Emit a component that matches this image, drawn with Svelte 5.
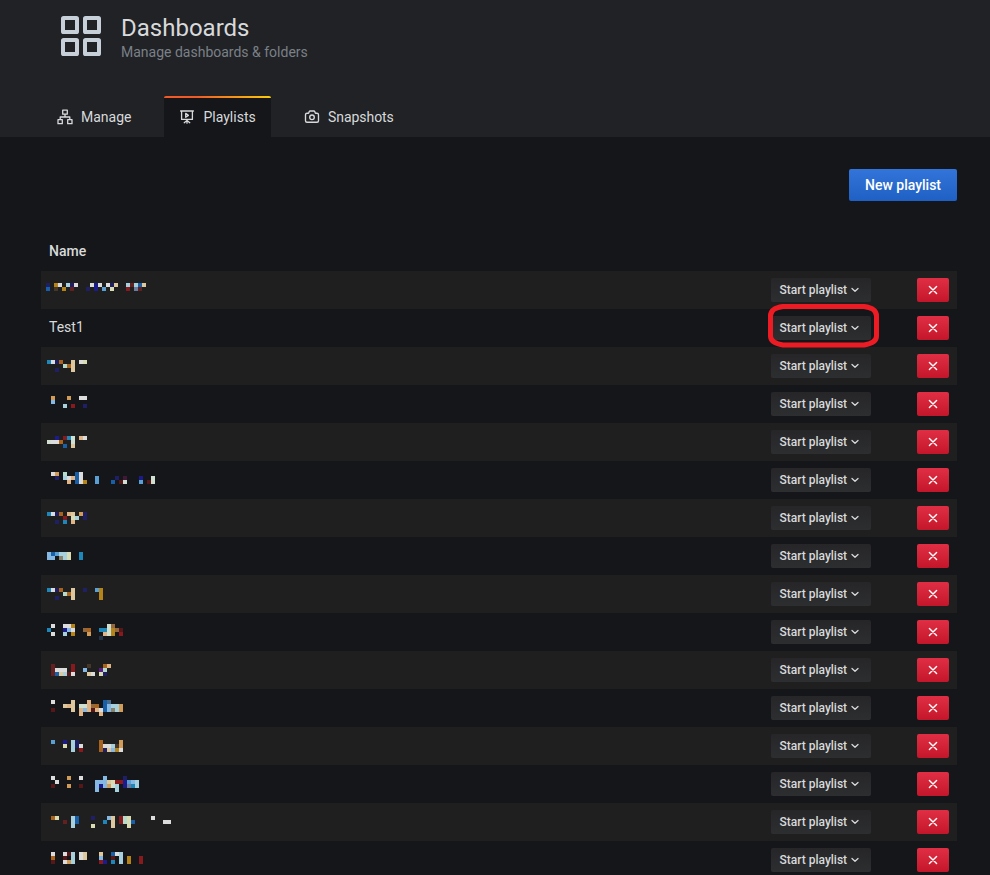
<script>
  const palette = {
    w: '#dcdcdc', n: '#1f1f66', N: '#1b1b8c', u: '#195fa8', c: '#1c87b8', s: '#5a9fd4',
    l: '#85b8e2', p: '#a5d0dc', m: '#b3dccc', g: '#d0e0d0', y: '#d9dcb0', t: '#dcc89c',
    T: '#e0b484', o: '#d09c58', b: '#a8641f', B: '#94683c', d: '#b48418', r: '#861a1c',
    R: '#622020', k: '#561719', q: '#463729', x: '#6c7c9c', v: '#5c1e80', h: '#88836c',
    e: '#421838', z: '#243444', Z: '#466c90'
  };

  const rows = [
    { x: 5, y: 12, m: ['n.dw.pnw...wNw.wnt..pRput', 'u.q.d.R...n.N.s.y...r.xR'] },
    { name: 'Test1' },
    { x: 6, y: 13, m: ['cwnb..t.wy', '....mbt', '..n...t'] },
    { x: 6, y: 11, m: ['.o...o..ww', '.l', '....p.r..n'] },
    { x: 6, y: 13, m: ['..N.rcg.Tw', 'gwwb..g', '....u.t'] },
    { x: 6, y: 11, m: ['.wo.m..uw', '..n.pwTuw...s....n.e...N..g', '.....T.uwd..s...u.kg...s.kg'] },
    { x: 6, y: 13, m: ['cwnb.Tt.on', '....r.yp.n', '..n.c.T'] },
    { x: 6, y: 15, m: ['lusppy..c', 'll.hpy..c'] },
    { x: 6, y: 13, m: ['cwnb..t..n..sd', '....mbt......d', '..n...t......d'] },
    { x: 6, y: 11, m: ['.w..wwd........gB', 'c...Nlw..Bb..ccgdBk', '.w..p.d...o...Tgd.r', '.............z'] },
    { x: 6, y: 13, m: ['.R....r...q...bT', '.Rwww.r..l...vm', '.Rutpkw...tw.yn'] },
    { x: 6, y: 11, m: ['.w....t...T...uZ', '....tTt.ggTBb.ulppo', '.k....t.TlTkTwulhpo', '........T....T'] },
    { x: 6, y: 13, m: ['.s..N.pn.....b....o', '....y.pnw....bwwpqo', '......p.r....bntldw'] },
    { x: 6, y: 11, m: ['.w...o..w.....l....n', '..w.........llltyrrNslp', '.k...o..k...lNlogp.Nxcp', '............l....p'] },
    { x: 6, y: 13, m: ['.by...pu...n...lt.rmy.....w', '....R.pu......c.t.rmyu.......ww', '......p....y....t...y'] },
    { x: 6, y: 11, m: ['.w..wkp.wt...t..uwp', '.b..k.p.wt...l..k.p.d..r', '.k..wop......rN.c.p.d..r'] }
  ];

  const cells = (m) =>
    m.flatMap((line, j) => [...line].map((ch, i) => ({ i, j, fill: palette[ch] }))).filter((c) => c.fill);
</script>

<div class="page">
  <header>
    <div class="title">
      <svg width="40" height="40" viewBox="0 0 40 40" fill="none" stroke="#c7d0d9" stroke-width="4">
        <rect x="2" y="2" width="14" height="14" rx=".6" />
        <rect x="24" y="2" width="14" height="14" rx=".6" />
        <rect x="2" y="24" width="14" height="14" rx=".6" />
        <rect x="24" y="24" width="14" height="14" rx=".6" />
      </svg>
      <div>
        <h1>Dashboards</h1>
        <p>Manage dashboards &amp; folders</p>
      </div>
    </div>
    <nav>
      <a class="tab manage">
        <svg width="16" height="16" viewBox="0 0 16 16" fill="none" stroke="currentColor" stroke-width="1.3">
          <path d="M5.7 1.2h4.6v4H5.7zM1 10.7h4.3v4H1zM10.7 10.7H15v4h-4.3zM8 5.2v2.7M3.2 10.7V8h9.6v2.7" stroke-linejoin="round" />
        </svg>
        Manage
      </a>
      <a class="tab active">
        <svg width="16" height="16" viewBox="0 0 16 16" fill="none" stroke="currentColor" stroke-width="1.3">
          <path d="M1.6 2h12.8M2.6 2v8.4h10.8V2M8 10.6v3.6M8 11.5l-2.8 2.2M8 11.5l2.8 2.2M6.7 4.4v3.900l2.700-1.950z" stroke-linecap="round" stroke-linejoin="round" />
        </svg>
        Playlists
      </a>
      <a class="tab snaps">
        <svg width="16" height="16" viewBox="0 0 16 16" fill="none" stroke="currentColor" stroke-width="1.35">
          <path d="M3 4.2h1.6l.7-1.6q.2-.6.8-.6h3.8q.6 0 .8.6l.7 1.6H13q1.5 0 1.5 1.5v6q0 1.5-1.5 1.5H3q-1.5 0-1.5-1.5v-6Q1.5 4.2 3 4.2z" stroke-linejoin="round" />
          <circle cx="8" cy="8.3" r="2.3" />
        </svg>
        Snapshots
      </a>
    </nav>
  </header>

  <main>
    <div class="actions"><button class="new">New playlist</button></div>
    <div class="head">Name</div>
    {#each rows as row}
      <div class="row">
        <div class="name">
          {#if row.name}
            <span>{row.name}</span>
          {:else}
            <svg width="200" height="38" shape-rendering="crispEdges">
              {#each cells(row.m) as c}
                <rect x={row.x + c.i * 4} y={row.y + c.j * 4} width="4" height="4" fill={c.fill} />
              {/each}
            </svg>
          {/if}
        </div>
        <button class="start">
          Start playlist
          <svg width="8" height="6" viewBox="0 0 8 6" fill="none" stroke="currentColor" stroke-width="1.3" stroke-linecap="round" stroke-linejoin="round">
            <path d="M1 1.4l3 2.8 3-2.8" />
          </svg>
          {#if row.name}
            <svg class="mark" width="111" height="44" viewBox="0 0 111 44" fill="none" stroke="#ed1c24" stroke-width="5">
              <path d="M15 2.5H96Q108.5 4 108.5 12V32Q108.5 39 96 41H15Q2.5 39 2.5 32V12Q2.5 4 15 2.5Z" stroke-linejoin="round" />
            </svg>
          {/if}
        </button>
        <button class="del" aria-label="Delete">
          <svg width="10" height="10" viewBox="0 0 10 10" fill="none" stroke="#fff" stroke-width="1.4" stroke-linecap="round">
            <path d="M1.4 1.4l7.2 7.2M8.6 1.4L1.4 8.6" />
          </svg>
        </button>
      </div>
    {/each}
  </main>
</div>

<style>
  :global(body) { background: #141619; overflow: hidden; }
  .page {
    width: 990px;
    height: 875px;
    overflow: hidden;
    background: #141619;
    color: #d8d9da;
    font: 14px/20px Roboto, sans-serif;
  }
  .page * { box-sizing: border-box; }
  header {
    height: 137px;
    background: #202226;
    display: flex;
    flex-direction: column;
    justify-content: space-between;
  }
  .title { display: flex; gap: 20px; padding: 16px 0 0 61px; }
  h1 { margin: -3px 0 0; font-size: 24px; font-weight: 400; line-height: 30px; }
  p { margin: -1px 0 0; color: #7b8087; font-size: 14px; line-height: 20px; }
  nav { display: flex; padding-left: 41px; }
  .tab { display: flex; align-items: center; height: 41px; padding: 0 16px; gap: 8px; white-space: nowrap; }
  .tab svg { flex: none; }
  .manage { width: 123px; }
  .active {
    width: 107px;
    padding-left: 15px;
    gap: 8.5px;
    background: linear-gradient(to right, #f05a28 30%, #fbca0a 99%) top / 100% 2px no-repeat, #141619;
    border-radius: 2px 2px 0 0;
  }
  .snaps { margin-left: 17px; letter-spacing: -0.05px; }
  main { padding: 32px 33px 0 41px; }
  .actions { display: flex; justify-content: flex-end; }
  button { border: 0; margin: 0; font-family: inherit; font-weight: 500; color: inherit; border-radius: 2px; }
  .new {
    width: 108px;
    height: 32px;
    padding: 0;
    color: #fff;
    font-size: 14px;
    background: linear-gradient(#3274d9, #1f60c4);
  }
  .head { height: 70px; padding: 40px 8px 0; font-weight: 500; }
  .row { display: flex; align-items: center; height: 38px; padding-right: 8px; }
  .row:nth-child(odd) { background: #1f1f1f; }
  .name { flex: 1; height: 38px; }
  .name span { display: block; padding: 8px 8px 0; }
  .name svg { display: block; }
  .start {
    position: relative;
    display: flex;
    align-items: center;
    gap: 4px;
    width: 100px;
    height: 24px;
    padding: 0 8px 0 8.5px;
    margin-right: 46px;
    font-size: 12px;
    white-space: nowrap;
    background: linear-gradient(#262628, #2d2e30);
  }
  .del {
    display: flex;
    align-items: center;
    justify-content: center;
    width: 32px;
    height: 24px;
    padding: 0;
    background: linear-gradient(#e02f44, #c4162a);
  }
  .mark {
    position: absolute;
    z-index: 1;
    left: -3px;
    top: -12px;
  }
</style>
